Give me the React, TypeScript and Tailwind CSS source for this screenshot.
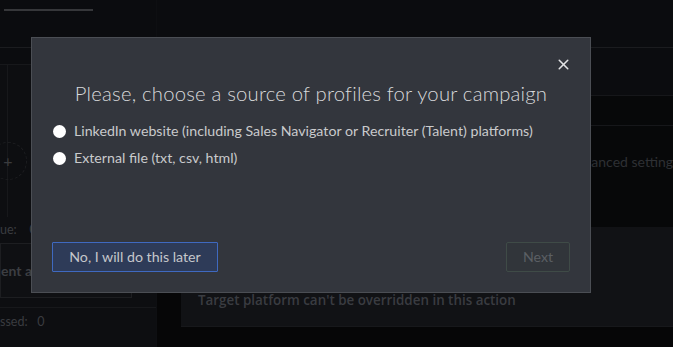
import { X } from "lucide-react";

export default function App() {
  const options = [
    "LinkedIn website (including Sales Navigator or Recruiter (Talent) platforms)",
    "External file (txt, csv, html)",
  ];

  return (
    <div className="relative w-[673px] h-[347px] overflow-hidden bg-[#0b0c0f] font-['Lato',sans-serif]">
      {/* Background page (dimmed) */}
      <div className="flex h-full">
        {/* Left sidebar */}
        <div className="w-[157px] flex flex-col border-r border-[#0e0f12]">
          <div className="pt-[9px] pl-[4px] h-[48px] border-b border-[#1b1c1f]">
            <div className="w-[89px] h-[2px] bg-[#36373a]" />
          </div>
          <div className="h-[17px] border-b border-[#17181b]" />
          <div className="flex-1 flex flex-col bg-[#0d0e11]">
            <div className="relative h-[152px] border-l border-[#17181b] ml-[7px]">
              <div className="absolute left-[-19px] top-[77px] w-[38px] h-[38px] rounded-full border border-dashed border-[#1d1e21] flex items-center justify-center text-[#3a3b3e] text-[16px]">
                +
              </div>
            </div>
            <div className="h-[26px] flex items-center text-[12.5px] text-[#3a3c40]">ue:&nbsp;&nbsp;&nbsp; 0</div>
            <div className="w-[132px] h-[55px] border border-[#1d1e21] bg-[#0f1013] flex items-center text-[14px] font-bold text-[#3c3e42]">
              <span>ent a</span>
            </div>
            <div className="h-[10px] border-b border-[#17181b]" />
            <div className="h-[28px] flex items-center text-[12.5px] text-[#3a3c40]">ssed:&nbsp;&nbsp; 0</div>
          </div>
        </div>
        {/* Main area */}
        <div className="flex-1 flex flex-col">
          <div className="h-[48px] border-b border-[#1b1c1f]" />
          <div className="h-[47px] bg-[#0b0c0f]" />
          <div className="h-[31px] border-y border-[#16171a] bg-[#070809]" />
          <div className="h-[101px] bg-[#070809] flex items-start justify-end pt-[25px]">
            <span className="text-[14px] text-[#2e3034]">anced setting</span>
          </div>
          <div className="flex flex-1">
            <div className="w-[24px] bg-[#060607]" />
            <div className="flex-1 flex flex-col">
              <div className="h-[100px] bg-[#111215] border-b border-[#17181b] flex items-end pb-[16px] pl-[17px]">
                <span className="font-['Open_Sans',sans-serif] text-[13.4px] font-semibold text-[#3a3c41]">
                  Target platform can't be overridden in this action
                </span>
              </div>
              <div className="flex-1 bg-[#060607]" />
            </div>
          </div>
        </div>
      </div>

      {/* Modal */}
      <div className="absolute left-[31px] top-[37px] w-[560px] h-[256px] bg-[#33363d] border border-[#4b4e54] flex flex-col">
        <button className="absolute right-[18px] top-[18px] text-[#e2e3e5]">
          <X size={17} strokeWidth={2.2} />
        </button>
        <h2 className="mt-[42px] text-center text-[20.3px] leading-[26px] font-light text-[#d8d9db] tracking-[0.2px]">
          Please, choose a source of profiles for your campaign
        </h2>
        <div className="mt-[16px] px-[21px] flex flex-col gap-[9px]">
          {options.map((label) => (
            <label key={label} className="flex items-center gap-[8px] h-[18px] text-[14.2px] text-[#c9cacc]">
              <span className="w-[13px] h-[13px] rounded-full bg-white shrink-0" />
              {label}
            </label>
          ))}
        </div>
        <div className="mt-auto mb-[20px] px-[20px] flex justify-between">
          <button className="h-[30px] w-[166px] border border-[#3f69c0] bg-[#2e3b58] text-[14.2px] text-[#c5c7cb] rounded-[1px]">
            No, I will do this later
          </button>
          <button className="h-[30px] w-[64px] border border-[#3f4b47] bg-[#31353a] text-[14.2px] text-[#5b5f64] rounded-[2px]">
            Next
          </button>
        </div>
      </div>
    </div>
  );
}
